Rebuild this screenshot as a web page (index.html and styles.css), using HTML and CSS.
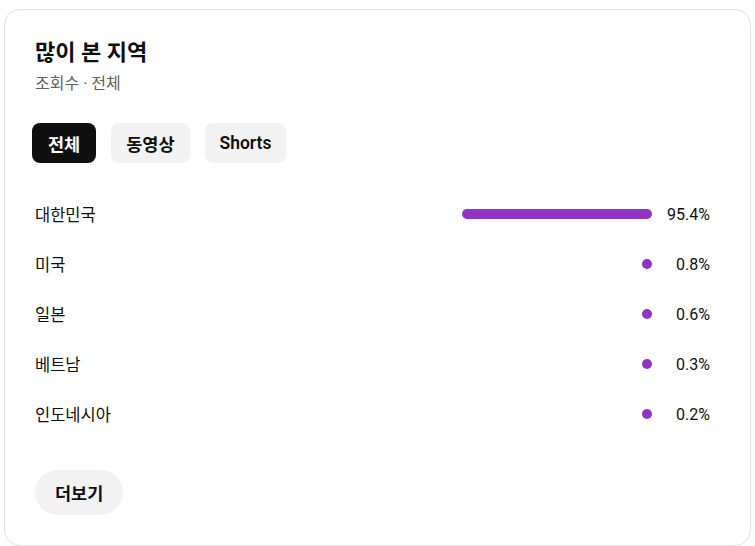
FILE: index.html
```html
<!DOCTYPE html>
<html lang="ko">
<head>
<meta charset="utf-8">
<link rel="stylesheet" href="styles.css">
</head>
<body>
<section class="card">
  <h2 class="title">많이 본 지역</h2>
  <div class="subtitle">조회수 · 전체</div>
  <div class="chips">
    <button class="chip active">전체</button>
    <button class="chip">동영상</button>
    <button class="chip">Shorts</button>
  </div>
  <ul class="rows">
    <li class="row"><span class="label">대한민국</span><span class="track"><span class="bar" style="width:190px"></span></span><span class="pct">95.4%</span></li>
    <li class="row"><span class="label">미국</span><span class="track"><span class="bar" style="width:10px"></span></span><span class="pct">0.8%</span></li>
    <li class="row"><span class="label">일본</span><span class="track"><span class="bar" style="width:10px"></span></span><span class="pct">0.6%</span></li>
    <li class="row"><span class="label">베트남</span><span class="track"><span class="bar" style="width:10px"></span></span><span class="pct">0.3%</span></li>
    <li class="row"><span class="label">인도네시아</span><span class="track"><span class="bar" style="width:10px"></span></span><span class="pct">0.2%</span></li>
  </ul>
  <button class="more">더보기</button>
</section>
</body>
</html>
```
FILE: styles.css
```css
* { box-sizing: border-box; }
html, body { margin: 0; padding: 0; background: #fff; }
body {
  font-family: Roboto, "Noto Sans CJK KR", "Noto Sans", sans-serif;
  color: #0f0f0f;
}
.card {
  margin: 9px 0 0 4px;
  width: 747px;
  height: 537px;
  border: 1px solid #e0e0e0;
  border-radius: 16px;
  padding: 29px 40px 30px 27px;
  display: flex;
  flex-direction: column;
  align-items: flex-start;
}
.title {
  margin: 0 0 0 3px;
  font-size: 22px;
  line-height: 28px;
  font-weight: 700;
}
.subtitle {
  margin: 6px 0 0 3px;
  font-size: 16px;
  line-height: 22px;
  color: #606060;
}
.chips {
  display: flex;
  gap: 15px;
  margin-top: 28px;
}
.chip {
  font-family: inherit;
  font-size: 17.5px;
  font-weight: 600;
  height: 40px;
  padding: 0 15px;
  border: none;
  border-radius: 8px;
  background: #f2f2f2;
  color: #0f0f0f;
}
.chip.active { background: #0f0f0f; color: #fff; padding: 0 16px; }
.rows {
  list-style: none;
  margin: 26px 0 0;
  padding: 0;
  width: 100%;
}
.row {
  height: 50px;
  display: flex;
  align-items: center;
  font-size: 16.5px;
  padding-left: 3px;
}
.label { flex: 1; }
.track {
  width: 200px;
  display: flex;
  justify-content: flex-end;
}
.bar {
  height: 10px;
  border-radius: 5px;
  background: #9133c3;
}
.pct {
  width: 58px;
  text-align: right;
  font-size: 16px;
}
.more {
  margin: 31px 0 0 3px;
  font-family: inherit;
  font-size: 17.5px;
  font-weight: 600;
  height: 45px;
  padding: 0 20px;
  border: none;
  border-radius: 23px;
  background: #f2f2f2;
  color: #0f0f0f;
}
```
